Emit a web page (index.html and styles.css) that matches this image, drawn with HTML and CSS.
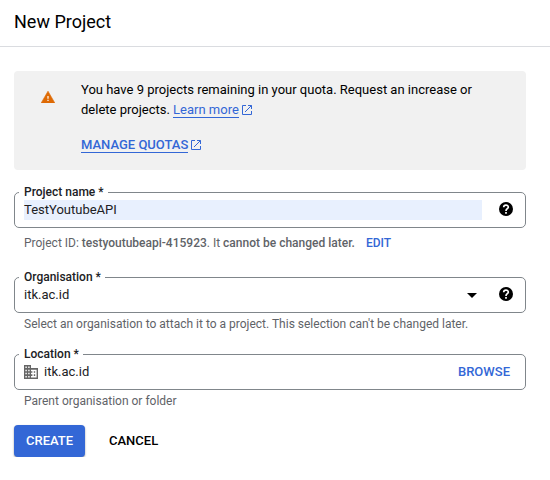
FILE: index.html
```html
<!DOCTYPE html>
<html lang="en">
<head>
<meta charset="utf-8">
<title>New Project</title>
<link rel="stylesheet" href="styles.css">
</head>
<body>
<svg width="0" height="0" class="sprite">
  <symbol id="open" viewBox="0 0 10 10"><path d="M4 .5H.5v9h9V6M6 .5h3.5V4M9.500 .5L3 7" fill="none" stroke="currentColor"/></symbol>
  <symbol id="help" viewBox="0 0 14 14"><circle cx="7" cy="7" r="7"/><path d="M4.700 5.300C4.700 2.500 9.300 2.500 9.300 5.200C9.300 6.700 7 6.800 7 8.900M7 10v1.800" fill="none" stroke="#fff" stroke-width="1.700"/></symbol>
</svg>
<header class="header"><h1 class="title">New Project</h1></header>
<main class="content">
  <section class="notice">
    <svg class="warning" width="14" height="12" viewBox="0 0 14 12"><path d="M7 .2L13.800 11.900H.2z" fill="#de6a05" stroke="#de6a05" stroke-width=".6" stroke-linejoin="round"/><path d="M7 5v2.700M7 8.700v1.300" stroke="#fff" stroke-width="1.200"/></svg>
    <div class="notice-text">
      <p>You have 9 projects remaining in your quota. Request an increase or<br>delete projects. <a class="link">Learn more</a><svg class="open"><use href="#open"/></svg></p>
      <p class="manage"><a class="link">MANAGE QUOTAS</a><svg class="open"><use href="#open"/></svg></p>
    </div>
  </section>

  <div class="field">
    <label class="label">Project name *</label>
    <span class="value autofill">TestYoutubeAPI</span>
    <svg class="help"><use href="#help"/></svg>
  </div>
  <p class="hint project-hint">Project ID: <b>testyoutubeapi-415923</b>. It <b>cannot be changed later.</b><a class="edit">EDIT</a></p>

  <div class="field">
    <label class="label">Organisation *</label>
    <span class="value">itk.ac.id</span>
    <svg class="arrow" width="10" height="5" viewBox="0 0 10 5"><path d="M0 0h10L5 5z"/></svg>
    <svg class="help"><use href="#help"/></svg>
  </div>
  <p class="hint org-hint">Select an organisation to attach it to a project. This selection can't be changed later.</p>

  <div class="field">
    <label class="label">Location *</label>
    <svg class="building" width="14" height="14" viewBox="2 3 20 18" preserveAspectRatio="none"><path fill="#666" d="M12 7V3H2v18h20V7H12zM6 19H4v-2h2v2zm0-4H4v-2h2v2zm0-4H4V9h2v2zm0-4H4V5h2v2zm4 12H8v-2h2v2zm0-4H8v-2h2v2zm0-4H8V9h2v2zm0-4H8V5h2v2zm10 12h-8v-2h2v-2h-2v-2h2v-2h-2V9h8v10zm-2-8h-2v2h2v-2zm0 4h-2v2h2v-2z"/></svg>
    <span class="value">itk.ac.id</span>
    <a class="browse">BROWSE</a>
  </div>
  <p class="hint location-hint">Parent organisation or folder</p>

  <div class="actions">
    <button class="button primary">CREATE</button>
    <button class="button">CANCEL</button>
  </div>
</main>
</body>
</html>
```
FILE: styles.css
```css
* { box-sizing: border-box; }
body { margin: 0; background: #fff; color: #000; font: 13px/20px Roboto, "Liberation Sans", sans-serif; }
p, h1 { margin: 0; }
.sprite { display: block; }
b { font-weight: 500; }
.header { height: 47px; padding: 10px 14px; border-bottom: 1px solid #dadce0; }
.title { font-size: 18px; font-weight: 400; line-height: 24px; }
.content { padding: 24px 24px 0 14px; }
.notice { display: flex; height: 99px; padding: 9px 0 0 27px; border-radius: 4px; background: #f1f1f1; }
.warning { flex: none; margin: 11px 26px 0 0; }
.manage { margin-top: 15px; font-weight: 500; }
.link { color: #3367d6; border-bottom: 1px solid #3367d6; }
.open { width: 10px; height: 10px; margin-left: 3px; color: #3367d6; vertical-align: -1px; }
.field { position: relative; display: flex; align-items: center; height: 36px; margin-top: 22px; padding: 0 12px 0 9px; border: 1px solid #80868b; border-radius: 5px; }
.label { position: absolute; top: -9px; left: 4px; padding: 0 4px 0 5px; background: #fff; color: #202124; font-size: 12px; font-weight: 500; line-height: 16px; }
.value { flex: 1; height: 20px; color: #202124; }
.autofill { flex: none; width: 458px; background: #e8f0fe; }
.help { flex: none; width: 14px; height: 14px; margin: 0 0 2px auto; }
.arrow { margin-right: 22px; }
.building { margin-right: 6px; }
.browse { margin-right: 3px; color: #3367d6; font-weight: 500; }
.hint { padding-left: 10px; color: #5f6368; font-size: 12px; line-height: 16px; }
.project-hint { margin-top: 7px; margin-bottom: 26px; }
.edit { margin-left: 11px; color: #3367d6; font-weight: 500; }
.org-hint { margin-top: 3px; }
.location-hint { margin-top: 3px; }
.actions { display: flex; gap: 12px; margin-top: 16px; }
.button { height: 32px; padding: 0 12px; border: 0; border-radius: 4px; background: none; color: #000; font: 500 13px/32px Roboto, "Liberation Sans", sans-serif; }
.primary { width: 71px; background: #3367d6; color: #fff; box-shadow: 0 1px 2px rgba(0, 0, 0, .4); }
```
